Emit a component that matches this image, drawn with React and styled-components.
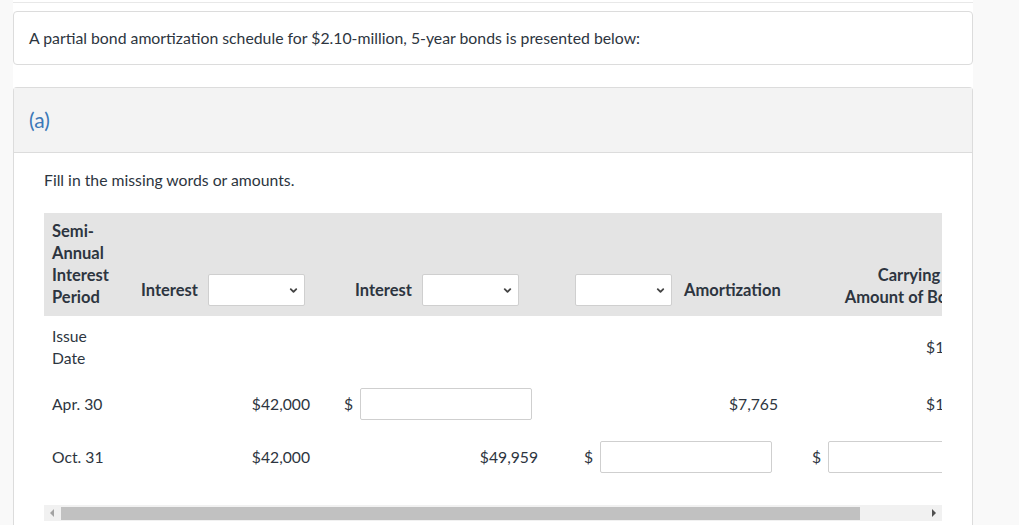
import React from "react";
import styled, { createGlobalStyle } from "styled-components";
import { ChevronDown } from "lucide-react";

const GlobalStyle = createGlobalStyle`
  html, body {
    margin: 0;
    padding: 0;
    background: #f9f9f9;
  }
  body {
    font-family: Lato, "Open Sans", "Liberation Sans", sans-serif;
    color: #2d3540;
  }
`;

function App() {
  return (
    <>
      <GlobalStyle />
      <Page>
        <Main>
          <TopRule />
          <IntroCard>
            A partial bond amortization schedule for $2.10-million, 5-year bonds
            is presented below:
          </IntroCard>
          <Part>
            <PartHeader>(a)</PartHeader>
            <PartBody>
              <Prompt>Fill in the missing words or amounts.</Prompt>
              <TableScroll>
                <Schedule>
                  <colgroup>
                    <col style={{ width: 86 }} />
                    <col style={{ width: 188 }} />
                    <col style={{ width: 228 }} />
                    <col style={{ width: 240 }} />
                    <col style={{ width: 228 }} />
                  </colgroup>
                  <thead>
                    <tr>
                      <HeadCell>
                        Semi-
                        <br />
                        Annual
                        <br />
                        Interest
                        <br />
                        Period
                      </HeadCell>
                      <HeadCell $pl={11}>
                        <HeadGroup>
                          <span>Interest</span>
                          <DropDown />
                        </HeadGroup>
                      </HeadCell>
                      <HeadCell $pl={37}>
                        <HeadGroup>
                          <span>Interest</span>
                          <DropDown />
                        </HeadGroup>
                      </HeadCell>
                      <HeadCell $pl={29}>
                        <HeadGroup $gap={12}>
                          <DropDown />
                          <span>Amortization</span>
                        </HeadGroup>
                      </HeadCell>
                      <HeadCell $center $pl={26}>
                        Carrying
                        <br />
                        Amount of Bonds
                      </HeadCell>
                    </tr>
                  </thead>
                  <tbody>
                    <Row $h={61}>
                      <Cell>
                        Issue
                        <br />
                        Date
                      </Cell>
                      <Cell />
                      <Cell />
                      <Cell />
                      <Cell $right>$1,990,600</Cell>
                    </Row>
                    <Row $h={53}>
                      <Cell>Apr. 30</Cell>
                      <Cell $right>$42,000</Cell>
                      <Cell $right>
                        <MoneyInput />
                      </Cell>
                      <Cell $right>$7,765</Cell>
                      <Cell $right>$1,998,365</Cell>
                    </Row>
                    <Row $h={53}>
                      <Cell>Oct. 31</Cell>
                      <Cell $right>$42,000</Cell>
                      <Cell $right>$49,959</Cell>
                      <Cell $right>
                        <MoneyInput />
                      </Cell>
                      <Cell $right>
                        <MoneyInput />
                      </Cell>
                    </Row>
                  </tbody>
                </Schedule>
              </TableScroll>
              <ScrollTrack>
                <ArrowButton>
                  <ArrowLeft />
                </ArrowButton>
                <Thumb />
                <Spacer />
                <ArrowButton>
                  <ArrowRight />
                </ArrowButton>
              </ScrollTrack>
            </PartBody>
          </Part>
        </Main>
      </Page>
    </>
  );
}

function DropDown() {
  return (
    <SelectWrap>
      <Select defaultValue="">
        <option value=""></option>
      </Select>
      <Chevron>
        <ChevronDown size={11} strokeWidth={4} />
      </Chevron>
    </SelectWrap>
  );
}

function MoneyInput() {
  return (
    <MoneyGroup>
      <span>$</span>
      <AmountInput type="text" />
    </MoneyGroup>
  );
}

export default App;

const Page = styled.div`
  display: flex;
  padding-left: 13px;
  min-height: 525px;
`;

const Main = styled.main`
  width: 960px;
  background: #fff;
  padding-top: 2px;
`;

const TopRule = styled.div`
  height: 1px;
  background: #e8e8e8;
`;

const IntroCard = styled.div`
  margin-top: 8px;
  border: 1px solid #dcdcdc;
  border-radius: 4px;
  padding: 15px;
  font-size: 15.8px;
  line-height: 22px;
`;

const Part = styled.section`
  margin-top: 22px;
  border: 1px solid #dcdcdc;
  border-bottom: none;
  border-radius: 4px 4px 0 0;
`;

const PartHeader = styled.div`
  background: #f3f3f3;
  padding: 18px 15px;
  font-size: 21px;
  line-height: 28px;
  color: #3a78b8;
  border-bottom: 1px solid #dcdcdc;
`;

const PartBody = styled.div`
  padding: 16px 29px 40px 30px;
`;

const Prompt = styled.p`
  margin: 0 0 22px;
  font-size: 15.75px;
  line-height: 22px;
`;

const TableScroll = styled.div`
  width: 898px;
  overflow: hidden;
`;

const Schedule = styled.table`
  width: 970px;
  table-layout: fixed;
  border-collapse: collapse;
  font-size: 15.7px;
  line-height: 22px;
`;

const HeadCell = styled.th`
  background: #e4e4e4;
  font-size: 16.5px;
  font-weight: 700;
  vertical-align: bottom;
  padding: 7px 8px 8px ${(p) => p.$pl || 8}px;
  text-align: ${(p) => (p.$center ? "center" : "left")};
  white-space: nowrap;
`;

const HeadGroup = styled.div`
  display: inline-flex;
  align-items: center;
  gap: ${(p) => p.$gap || 10}px;
  margin-bottom: 2px;
`;

const SelectWrap = styled.div`
  position: relative;
  width: 97px;
  height: 32px;
`;

const Select = styled.select`
  appearance: none;
  width: 100%;
  height: 100%;
  box-sizing: border-box;
  border: 1px solid #cfcfcf;
  border-radius: 2px;
  background: #fff;
  font: inherit;
`;

const Chevron = styled.span`
  position: absolute;
  right: 6px;
  top: 11px;
  display: flex;
  color: #444;
  pointer-events: none;
`;

const Row = styled.tr`
  height: ${(p) => p.$h}px;
`;

const Cell = styled.td`
  padding: 0 8px;
  vertical-align: middle;
  text-align: ${(p) => (p.$right ? "right" : "left")};
  white-space: nowrap;
`;

const MoneyGroup = styled.div`
  display: inline-flex;
  align-items: center;
  gap: 7px;
  margin-right: 6px;
`;

const AmountInput = styled.input`
  width: 172px;
  height: 32px;
  box-sizing: border-box;
  border: 1px solid #cfcfcf;
  border-radius: 2px;
  background: #fff;
  font: inherit;
`;

const ScrollTrack = styled.div`
  display: flex;
  align-items: center;
  width: 898px;
  height: 16px;
  margin-top: 22px;
  background: #f1f1f1;
`;

const ArrowButton = styled.div`
  width: 16px;
  height: 16px;
  display: flex;
  align-items: center;
  justify-content: center;
`;

const ArrowLeft = styled.span`
  width: 0;
  height: 0;
  border-top: 4px solid transparent;
  border-bottom: 4px solid transparent;
  border-right: 4px solid #a3a3a3;
`;

const ArrowRight = styled.span`
  width: 0;
  height: 0;
  border-top: 4px solid transparent;
  border-bottom: 4px solid transparent;
  border-left: 4px solid #505050;
`;

const Thumb = styled.div`
  width: 799px;
  height: 13px;
  margin-left: 1px;
  background: #c1c1c1;
`;

const Spacer = styled.div`
  flex: 1;
`;
